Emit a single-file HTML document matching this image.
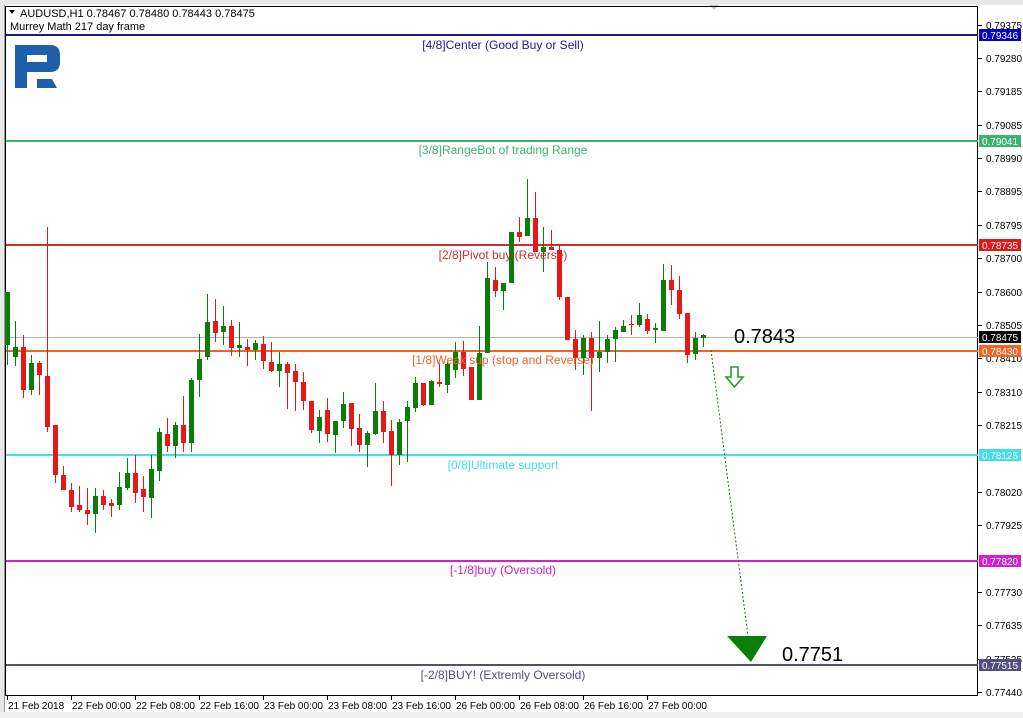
<!DOCTYPE html>
<html><head><meta charset="utf-8"><style>
html,body{margin:0;padding:0;background:#fff;width:1023px;height:718px;overflow:hidden;font-family:"Liberation Sans",sans-serif}
svg{position:absolute;left:0;top:0}
</style></head><body>
<svg id="s" width="1023" height="718" xmlns="http://www.w3.org/2000/svg" font-family="Liberation Sans, DejaVu Sans, sans-serif">
<rect x="0" y="0" width="1023" height="718" fill="#fff"/>
<rect x="0" y="0" width="1023" height="5" fill="#e8e8e8"/>
<rect x="0" y="0" width="4" height="718" fill="#e8e8e8"/>
<rect x="0" y="712" width="1023" height="6" fill="#f0f0f0"/>
<line x1="4.5" y1="5" x2="4.5" y2="712" stroke="#9a9a9a"/>
<path d="M709,5 L719,5 L714,10 Z" fill="#c8c8c8"/>
<rect x="5.5" y="6.5" width="972" height="689" fill="none" stroke="#000" stroke-width="1"/>
<g id="levels"></g>
<line x1="6" y1="337.5" x2="978" y2="337.5" stroke="#b4b4b4"/>
<g id="candles"></g>
<g font-size="12" text-anchor="middle">
<text x="503" y="49" fill="#1c1c8c">[4/8]Center (Good Buy or Sell)</text>
<text x="503" y="154" fill="#3cb371">[3/8]RangeBot of trading Range</text>
<text x="503" y="259" fill="#c83232">[2/8]Pivot buy (Reverse)</text>
<text x="503" y="364" fill="#f06428">[1/8]Weak sup (stop and Reverse)</text>
<text x="503" y="469" fill="#40e0e8">[0/8]Ultimate support</text>
<text x="503" y="574" fill="#d020d0">[-1/8]buy (Oversold)</text>
<text x="503" y="679" fill="#505080">[-2/8]BUY! (Extremly Oversold)</text>
</g>
<path d="M15,45 H50 Q60,45 60,55 V62 Q60,72 50,72 H27 V88 H15 Z M27,55 V62 H47 V55 Z" fill="#1f5ea8" fill-rule="evenodd"/>
<path d="M37,79 H52 L57,88 H37 Z" fill="#1f5ea8"/>
<path d="M9,10 L15,10 L12,14 Z" fill="#000"/>
<text x="20" y="17" font-size="11" fill="#000">AUDUSD,H1  0.78467 0.78480 0.78443 0.78475</text>
<text x="10" y="30" font-size="11" fill="#000">Murrey Math 217 day frame</text>
<line x1="711" y1="350" x2="748" y2="636" stroke="#0a7d0a" stroke-dasharray="2,2"/>
<path d="M727,636 L767,636 L751,662 Z" fill="#0a7d0a"/>
<path d="M731,367 h7 v10 h5 l-8.5,10 l-8.5,-10 h5 Z" fill="#fff" stroke="#2a9a2a" stroke-width="1.6"/>
<text x="734" y="343" font-size="20" fill="#000">0.7843</text>
<text x="782" y="661" font-size="20" fill="#000">0.7751</text>
<g id="axis" font-size="10" fill="#000"></g>
<g id="dates" font-size="10" fill="#000"></g>
</svg>
<script>
var NS="http://www.w3.org/2000/svg";
function el(p,t,a,txt){var e=document.createElementNS(NS,t);for(var k in a)e.setAttribute(k,a[k]);if(txt)e.textContent=txt;document.getElementById(p).appendChild(e);return e;}
var lv=[[35,"#1c1c8c","0.79346","#0000c8","#fff"],[141,"#3cb371","0.79041","#3cb371","#fff"],[245,"#c83232","0.78735","#e01818","#fff"],[351,"#f06428","0.78430","#f06428","#fff"],[455,"#40e0e8","0.78125","#40e0e8","#fff"],[561,"#d020d0","0.77820","#d020d0","#fff"],[665,"#505080","0.77515","#505080","#fff"]];
lv.forEach(function(l){el("levels","rect",{x:6,y:l[0]-1,width:972,height:2,fill:l[1]});});
var C=[
[7,292,345,292,365,"g"],[15,347,357,321,366,"g"],[23,347,390,335,398,"r"],[31,363,390,355,395,"g"],[39,363,375,361,395,"r"],[47,376,427,227,432,"r"],[55,425,475,425,483,"r"],[63,475,490,466,490,"r"],[71,490,507,483,512,"r"],[79,505,510,486,512,"r"],[87,510,514,488,525,"r"],[95,496,514,488,533,"g"],[103,496,505,490,510,"r"],[111,503,506,499,517,"r"],[119,487,505,472,510,"g"],[127,473,488,458,490,"g"],[135,473,493,455,503,"r"],[143,489,497,476,512,"r"],[151,469,498,455,518,"g"],[159,432,471,428,481,"g"],[167,434,446,418,452,"r"],[175,425,446,422,458,"g"],[183,425,443,396,452,"r"],[191,380,443,378,452,"g"],[199,359,380,334,397,"g"],[207,322,357,294,360,"g"],[215,321,333,299,342,"r"],[223,326,332,306,345,"g"],[231,326,348,320,356,"r"],[239,345,348,322,357,"g"],
[247,347,350,339,366,"r"],[255,343,350,340,360,"g"],[263,344,361,336,369,"r"],[271,362,371,342,372,"r"],[279,364,371,352,387,"g"],[287,364,373,362,409,"r"],[295,371,382,364,411,"r"],[303,382,401,372,410,"r"],[311,401,430,401,433,"r"],[319,417,431,410,443,"g"],[327,410,434,398,442,"r"],[335,421,435,421,453,"g"],[343,404,421,392,428,"g"],[351,403,429,403,446,"r"],[359,428,445,414,452,"r"],[367,433,445,431,467,"g"],[375,411,434,383,435,"g"],[383,411,432,401,443,"r"],[391,431,455,420,486,"r"],[399,422,455,419,465,"g"],[407,407,421,401,462,"g"],[415,383,408,377,412,"g"],[423,383,405,383,406,"r"],[431,381,405,380,405,"g"],[439,382,384,363,387,"r"],[447,364,385,362,393,"g"],[455,352,370,342,378,"g"],[463,352,369,341,376,"r"],[471,367,400,367,400,"r"],[479,353,400,326,400,"g"],
[487,278,353,262,353,"g"],[495,280,291,267,297,"r"],[503,283,291,283,310,"g"],[511,232,283,232,283,"g"],[519,232,237,217,242,"r"],[527,218,236,179,236,"g"],[535,218,252,192,252,"r"],[543,247,252,227,272,"g"],[551,247,250,230,250,"r"],[559,250,297,244,300,"r"],[567,297,340,297,340,"r"],[575,339,358,330,370,"r"],[583,338,358,335,375,"g"],[591,338,358,332,411,"r"],[599,352,358,321,372,"g"],[607,339,352,335,363,"g"],[615,330,339,327,362,"g"],[623,326,332,320,332,"g"],[631,324,325,315,335,"r"],[639,315,325,303,327,"g"],[647,319,331,314,334,"r"],[655,328,330,323,343,"g"],[663,280,331,264,331,"g"],[671,280,290,265,305,"r"],[679,290,314,276,319,"r"],[687,313,355,313,363,"r"],[695,338,354,332,360,"g"],[703,335,338,334,347,"g"]];
C.forEach(function(c){var col=c[5]=="g"?"#0a7d0a":"#e61919";el("candles","rect",{x:c[0],y:c[3],width:1,height:c[4]-c[3],fill:col});el("candles","rect",{x:c[0]-2,y:c[1],width:5,height:Math.max(1,c[2]-c[1]),fill:col});});
var T=[[25,"0.79375"],[58,"0.79280"],[91,"0.79185"],[125,"0.79085"],[158,"0.78990"],[191,"0.78895"],[225,"0.78795"],[258,"0.78700"],[292,"0.78600"],[325,"0.78505"],[358,"0.78410"],[392,"0.78310"],[425,"0.78215"],[492,"0.78020"],[525,"0.77925"],[592,"0.77730"],[625,"0.77635"],[659,"0.77535"],[692,"0.77440"]];
T.forEach(function(t){el("axis","rect",{x:978,y:t[0],width:4,height:1,fill:"#000"});el("axis","text",{x:986,y:t[0]+4,textLength:36,lengthAdjust:"spacingAndGlyphs"},t[1]);});
lv.forEach(function(l){el("axis","rect",{x:979,y:l[0]-6,width:42,height:12,fill:l[3]});el("axis","text",{x:982,y:l[0]+4,fill:l[4],textLength:36,lengthAdjust:"spacingAndGlyphs"},l[2]);});
el("axis","rect",{x:979,y:331,width:42,height:12,fill:"#000"});el("axis","text",{x:982,y:341,fill:"#fff",textLength:36,lengthAdjust:"spacingAndGlyphs"},"0.78475");
var D=[[7,"21 Feb 2018"],[71,"22 Feb 00:00"],[135,"22 Feb 08:00"],[199,"22 Feb 16:00"],[263,"23 Feb 00:00"],[327,"23 Feb 08:00"],[391,"23 Feb 16:00"],[455,"26 Feb 00:00"],[519,"26 Feb 08:00"],[583,"26 Feb 16:00"],[647,"27 Feb 00:00"]];
D.forEach(function(d){el("dates","rect",{x:d[0],y:696,width:1,height:4,fill:"#000"});el("dates","text",{x:d[0]+1,y:709},d[1]);});
</script>
</body></html>
